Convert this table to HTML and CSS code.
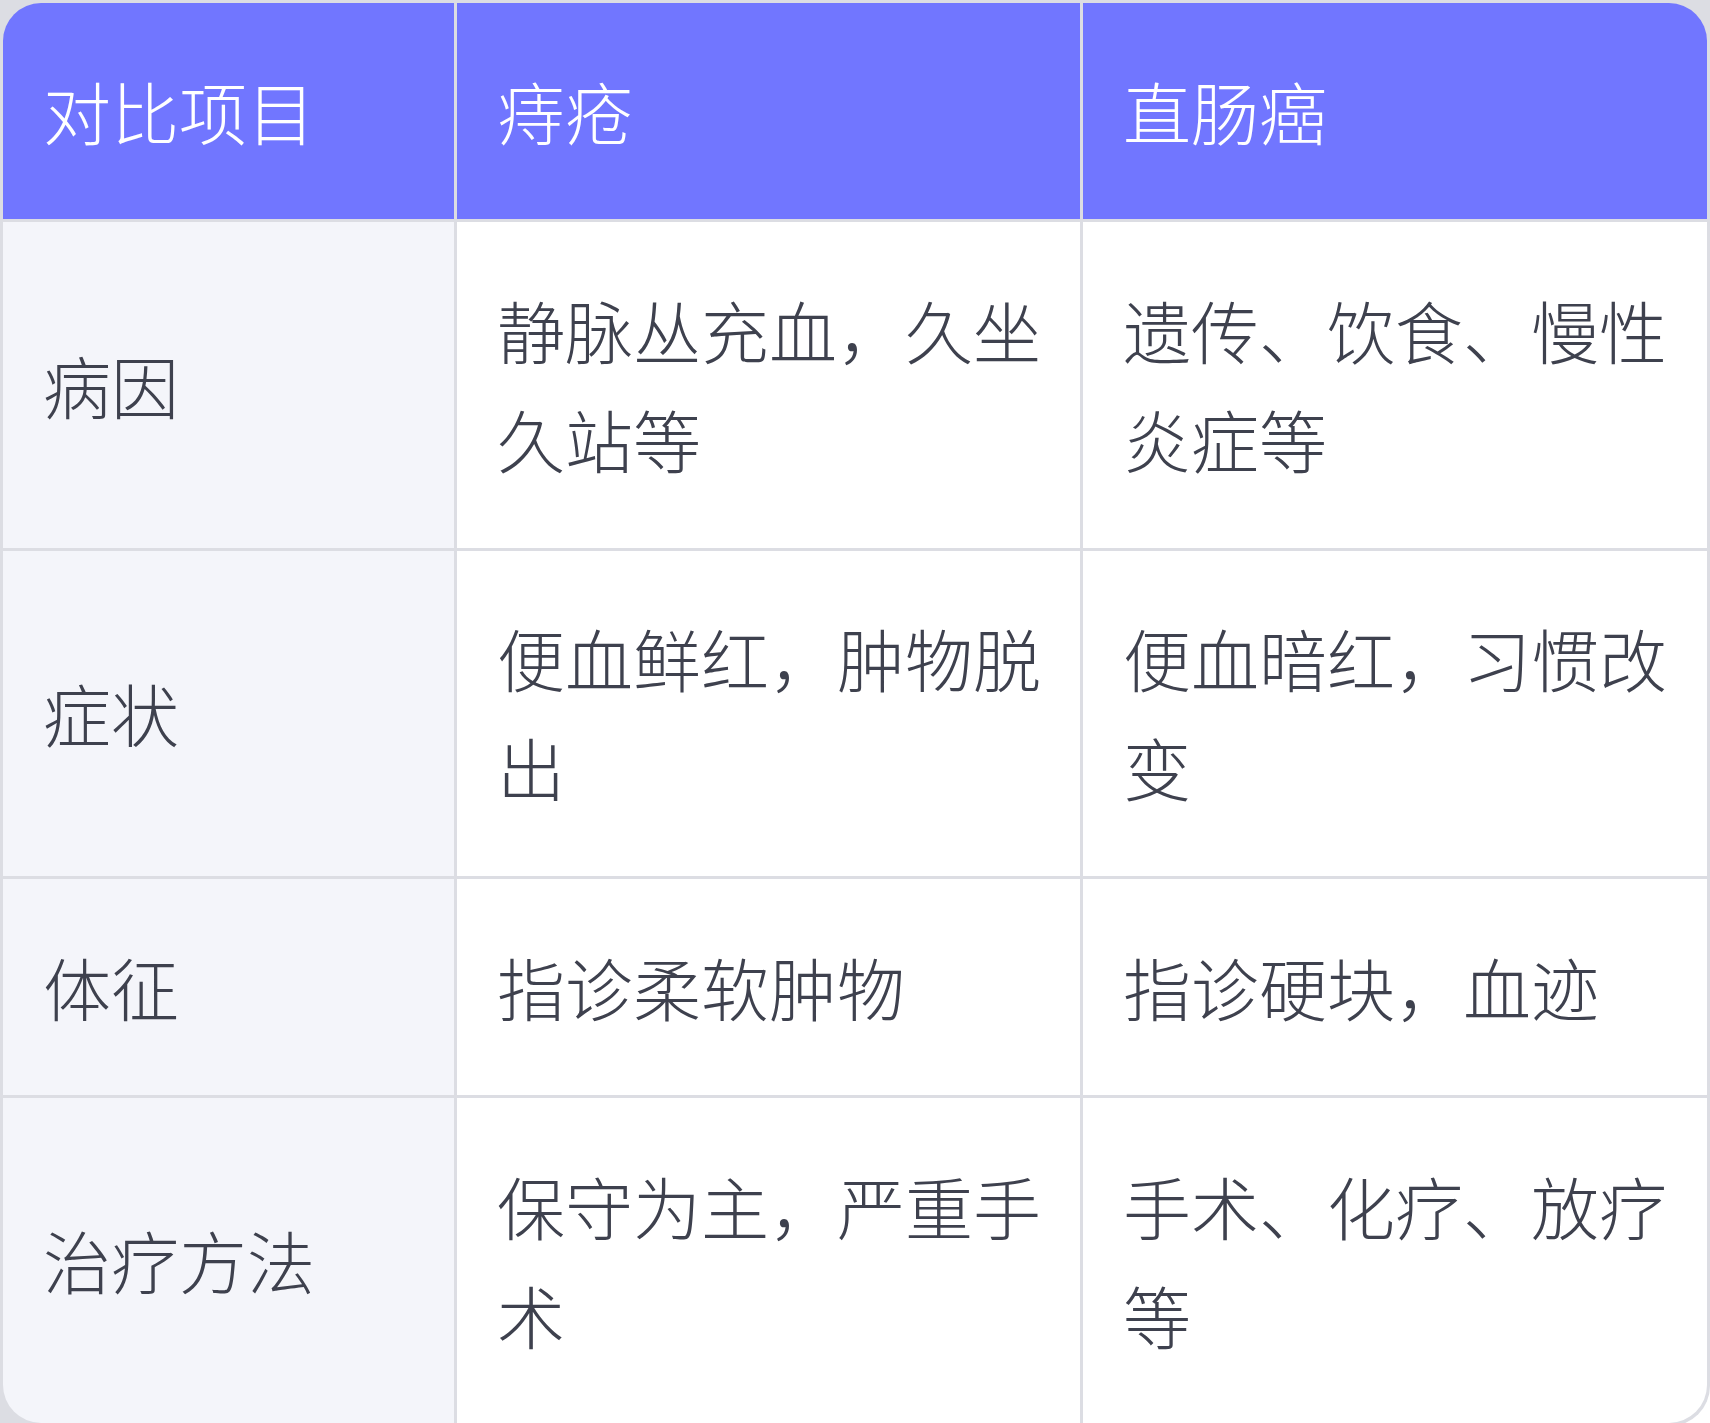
FILE: index.html
```html
<!DOCTYPE html>
<html lang="zh-CN">
<head>
<meta charset="utf-8">
<title>痔疮与直肠癌对比</title>
<link rel="stylesheet" href="styles.css">
</head>
<body>
<div class="compare">
  <div class="cell head first">对比项目</div>
  <div class="cell head">痔疮</div>
  <div class="cell head last">直肠癌</div>

  <div class="cell label">病因</div>
  <div class="cell">静脉丛充血，久坐久站等</div>
  <div class="cell">遗传、饮食、慢性炎症等</div>

  <div class="cell label">症状</div>
  <div class="cell">便血鲜红，肿物脱出</div>
  <div class="cell">便血暗红，习惯改变</div>

  <div class="cell label">体征</div>
  <div class="cell">指诊柔软肿物</div>
  <div class="cell">指诊硬块，血迹</div>

  <div class="cell label bl">治疗方法</div>
  <div class="cell">保守为主，严重手术</div>
  <div class="cell br">手术、化疗、放疗等</div>
</div>
</body>
</html>
```

FILE: styles.css
```css
html, body {
  margin: 0;
  padding: 0;
  background: #ffffff;
}

.compare {
  display: grid;
  grid-template-columns: 451px 623px 624px;
  gap: 3px;
  padding: 3px;
  width: 1710px;
  box-sizing: border-box;
  background: #dcdde3;
  border-radius: 0 0 40px 0;
  font-family: "Noto Sans CJK SC", "Noto Sans", sans-serif;
  font-size: 68px;
  line-height: 1.6;
  font-weight: 300;
  color: #3e414e;
}

.cell {
  padding: 53.8px 30px 53.8px 40px;
  background: #ffffff;
  display: flex;
  align-items: center;
}

.head {
  background: #7176ff;
  color: #ffffff;
}

.head.first {
  border-top-left-radius: 38px;
}

.head.last {
  border-top-right-radius: 38px;
}

.label {
  background: #f4f5fa;
}

.bl {
  border-bottom-left-radius: 38px;
}

.br {
  border-bottom-right-radius: 38px;
}
```
